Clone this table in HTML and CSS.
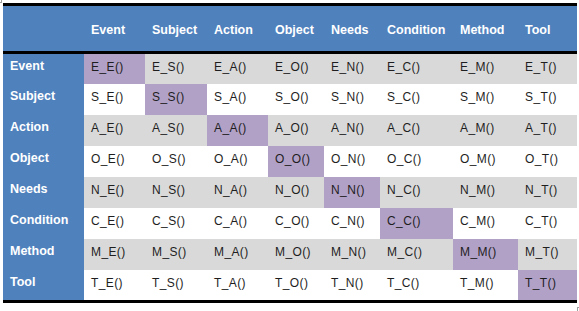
FILE: index.html
```html
<!DOCTYPE html>
<html>
<head>
<meta charset="utf-8">
<link rel="stylesheet" href="styles.css">
</head>
<body>
<span class="mark mark-tl"></span>
<table class="matrix">
  <colgroup>
    <col class="c-head"><col class="c-event"><col class="c-subject"><col class="c-action"><col class="c-object"><col class="c-needs"><col class="c-condition"><col class="c-method"><col class="c-tool">
  </colgroup>
  <thead>
    <tr>
      <th></th><th>Event</th><th>Subject</th><th>Action</th><th>Object</th><th>Needs</th><th>Condition</th><th>Method</th><th>Tool</th>
    </tr>
  </thead>
  <tbody>
    <tr class="shade">
      <th>Event</th><td class="diag">E_E()</td><td>E_S()</td><td>E_A()</td><td>E_O()</td><td>E_N()</td><td>E_C()</td><td>E_M()</td><td>E_T()</td>
    </tr>
    <tr>
      <th>Subject</th><td>S_E()</td><td class="diag">S_S()</td><td>S_A()</td><td>S_O()</td><td>S_N()</td><td>S_C()</td><td>S_M()</td><td>S_T()</td>
    </tr>
    <tr class="shade">
      <th>Action</th><td>A_E()</td><td>A_S()</td><td class="diag">A_A()</td><td>A_O()</td><td>A_N()</td><td>A_C()</td><td>A_M()</td><td>A_T()</td>
    </tr>
    <tr>
      <th>Object</th><td>O_E()</td><td>O_S()</td><td>O_A()</td><td class="diag">O_O()</td><td>O_N()</td><td>O_C()</td><td>O_M()</td><td>O_T()</td>
    </tr>
    <tr class="shade">
      <th>Needs</th><td>N_E()</td><td>N_S()</td><td>N_A()</td><td>N_O()</td><td class="diag">N_N()</td><td>N_C()</td><td>N_M()</td><td>N_T()</td>
    </tr>
    <tr>
      <th>Condition</th><td>C_E()</td><td>C_S()</td><td>C_A()</td><td>C_O()</td><td>C_N()</td><td class="diag">C_C()</td><td>C_M()</td><td>C_T()</td>
    </tr>
    <tr class="shade">
      <th>Method</th><td>M_E()</td><td>M_S()</td><td>M_A()</td><td>M_O()</td><td>M_N()</td><td>M_C()</td><td class="diag">M_M()</td><td>M_T()</td>
    </tr>
    <tr class="last">
      <th>Tool</th><td>T_E()</td><td>T_S()</td><td>T_A()</td><td>T_O()</td><td>T_N()</td><td>T_C()</td><td>T_M()</td><td class="diag">T_T()</td>
    </tr>
  </tbody>
</table>
<span class="mark mark-br"></span>
</body>
</html>
```
FILE: styles.css
```css
html, body {
  margin: 0;
  padding: 0;
  background: #ffffff;
}

body {
  position: relative;
  width: 579px;
  height: 311px;
  font-family: "Liberation Sans", Arial, sans-serif;
}

.matrix {
  margin: 3px 0 0 3px;
  width: 574px;
  border-collapse: collapse;
  table-layout: fixed;
  border-top: 3px solid #000;
  border-bottom: 3px solid #000;
}

.c-head { width: 81px; }
.c-event { width: 61px; }
.c-subject { width: 62px; }
.c-action { width: 61px; }
.c-object { width: 56px; }
.c-needs { width: 56px; }
.c-condition { width: 73px; }
.c-method { width: 65px; }
.c-tool { width: 59px; }

.matrix th,
.matrix td {
  padding: 0 0 0 7px;
  text-align: left;
  white-space: nowrap;
}

.matrix thead tr {
  border-bottom: 3px solid #000;
}

.matrix thead th {
  height: 41px;
  padding-top: 4px;
  padding-bottom: 0;
  vertical-align: middle;
  background: #4f81bd;
  color: #ffffff;
  font-weight: bold;
  font-size: 12.5px;
  line-height: 15px;
}

.matrix tbody tr {
  height: 31px;
}

.matrix tbody tr.last {
  height: 32px;
}

.matrix tbody th {
  background: #4f81bd;
  color: #ffffff;
  font-weight: bold;
  font-size: 12.5px;
  line-height: 15px;
  vertical-align: top;
  padding-top: 5px;
}

.matrix tbody td {
  font-size: 12px;
  line-height: 14px;
  letter-spacing: 0.4px;
  color: #1e1e1e;
  vertical-align: top;
  padding-top: 6px;
  background: #ffffff;
}

.matrix tbody tr.shade td {
  background: #d9d9d9;
}

.matrix tbody td.diag,
.matrix tbody tr.shade td.diag {
  background: #b2a1c7;
}

.mark {
  position: absolute;
}

.mark-tl {
  left: 0;
  top: 0;
  border-right: 1px solid #a0a0a0;
  border-bottom: 1px solid #a0a0a0;
  width: 1px;
  height: 2px;
}

.mark-br {
  left: 577px;
  top: 307px;
  width: 2px;
  height: 3px;
  border-left: 1px solid #a0a0a0;
  border-top: 1px solid #a0a0a0;
}
```
